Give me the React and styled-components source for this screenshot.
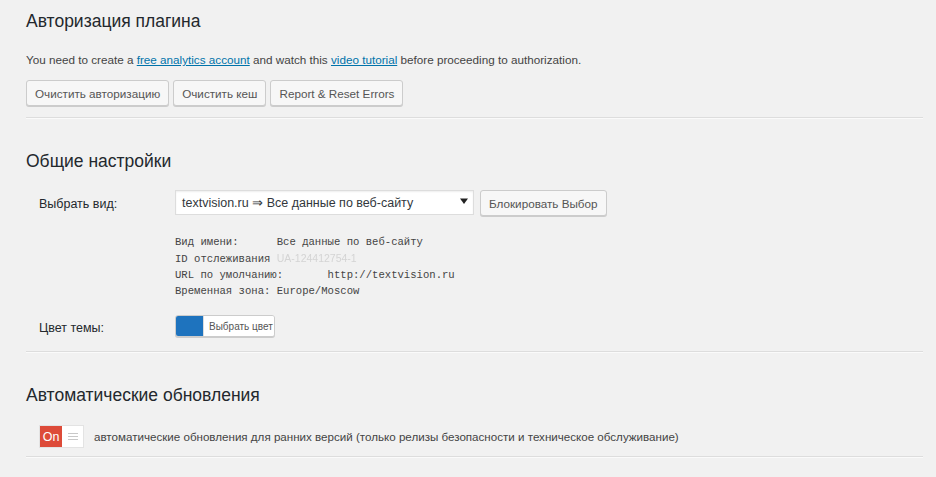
import styled, { createGlobalStyle } from "styled-components";

const GlobalStyle = createGlobalStyle`
    body {
        margin: 0;
        background: #f1f1f1;
        color: #444;
        font-family: "Liberation Sans", Arial, sans-serif;
        font-size: 13px;
    }
`;

const App = () => {
    return (
        <>
            <GlobalStyle />
            <Wrap>
                <Heading $top={7}>Авторизация плагина</Heading>
                <Text>
                    You need to create a <Link>free analytics account</Link> and watch this{" "}
                    <Link>video tutorial</Link> before proceeding to authorization.
                </Text>
                <Buttons>
                    <Button>Очистить авторизацию</Button>
                    <Button>Очистить кеш</Button>
                    <Button>Report &amp; Reset Errors</Button>
                </Buttons>
                <Rule $top={11} />

                <Heading $top={29}>Общие настройки</Heading>
                <Row $top={15}>
                    <Label>Выбрать вид:</Label>
                    <Field>
                        <Controls>
                            <Select>
                                <span>textvision.ru ⇒ Все данные по веб-сайту</span>
                                <Arrow viewBox="0 0 8 8">
                                    <path d="M0 1.5h8L4 7z" fill="#222" />
                                </Arrow>
                            </Select>
                            <Button>Блокировать Выбор</Button>
                        </Controls>
                        <Info>
                            <InfoLine>{"Вид имени:      Все данные по веб-сайту"}</InfoLine>
                            <InfoLine>
                                {"ID отслеживания "}
                                <Blurred>UA-124412754-1</Blurred>
                            </InfoLine>
                            <InfoLine>{"URL по умолчанию:       http://textvision.ru"}</InfoLine>
                            <InfoLine>{"Временная зона: Europe/Moscow"}</InfoLine>
                        </Info>
                    </Field>
                </Row>
                <Row $top={15}>
                    <Label>Цвет темы:</Label>
                    <Field>
                        <ColorButton>
                            <Swatch />
                            <ColorText>Выбрать цвет</ColorText>
                        </ColorButton>
                    </Field>
                </Row>
                <Rule $top={14} />

                <Heading $top={29}>Автоматические обновления</Heading>
                <ToggleRow>
                    <Toggle>
                        <ToggleOn>On</ToggleOn>
                        <ToggleOff>
                            <Bars>
                                <i />
                                <i />
                                <i />
                            </Bars>
                        </ToggleOff>
                    </Toggle>
                    <ToggleText>
                        автоматические обновления для ранних версий (только релизы безопасности и техническое обслуживание)
                    </ToggleText>
                </ToggleRow>
                <Rule $top={8} />
            </Wrap>
        </>
    );
};

export default App;

const Wrap = styled.div`
    width: 897px;
    margin-left: 26px;
    padding-top: 1px;
`;

const Heading = styled.h2`
    margin: ${props => props.$top - 1}px 0 0;
    font-size: 17.5px;
    font-weight: 400;
    line-height: 28px;
    color: #23282d;
`;

const Text = styled.p`
    margin: 16px 0 0;
    line-height: 18px;
    font-size: 11.7px;
    color: #444;
`;

const Link = styled.a`
    color: #0073aa;
    text-decoration: underline;
    cursor: pointer;
`;

const Buttons = styled.div`
    display: flex;
    gap: 4px;
    margin-top: 11px;
`;

const Button = styled.button`
    height: 26px;
    padding: 0 8px;
    border: 1px solid #ccc;
    border-radius: 3px;
    background: #f7f7f7;
    box-shadow: 0 1px 0 #ccc;
    color: #555;
    font-family: inherit;
    font-size: 11.7px;
    white-space: nowrap;
    cursor: pointer;
`;

const Rule = styled.hr`
    margin: ${props => props.$top}px 0 0;
    border: 0;
    border-top: 1px solid #ddd;
    border-bottom: 1px solid #fafafa;
`;

const Row = styled.div`
    display: flex;
    margin-top: ${props => props.$top}px;
`;

const Label = styled.div`
    width: 136px;
    padding-left: 13px;
    padding-top: 5px;
    line-height: 18px;
    color: #23282d;
    font-size: 12.5px;
    box-sizing: border-box;
    flex: none;
    white-space: nowrap;
`;

const Field = styled.div`
    padding-left: 13px;
`;

const Controls = styled.div`
    display: flex;
    align-items: flex-start;
    gap: 6px;
`;

const Select = styled.div`
    width: 299px;
    height: 25px;
    box-sizing: border-box;
    display: flex;
    align-items: center;
    justify-content: space-between;
    padding: 0 5px 0 6px;
    background: #fff;
    border: 1px solid #ddd;
    box-shadow: inset 0 1px 2px rgba(0, 0, 0, 0.07);
    color: #32373c;
    font-size: 12.5px;
`;

const Arrow = styled.svg`
    width: 8px;
    height: 8px;
    margin-bottom: 3px;
`;

const Info = styled.div`
    margin-top: 18px;
    font-family: "Liberation Mono", "DejaVu Sans Mono", monospace;
    font-size: 10.6px;
    line-height: 16px;
    color: #444;
`;

const InfoLine = styled.div`
    white-space: pre;
`;

const Blurred = styled.span`
    font-family: "Liberation Sans", sans-serif;
    font-size: 10.5px;
    color: #d4d4d4;
    filter: blur(0.4px);
`;

const ColorButton = styled.div`
    display: flex;
    width: 100px;
    height: 22px;
    margin-top: 1px;
    box-sizing: border-box;
    border: 1px solid #ccc;
    border-radius: 3px;
    background: #f7f7f7;
    box-shadow: 0 1px 0 #ccc;
    overflow: hidden;
`;

const Swatch = styled.div`
    width: 27px;
    flex: none;
    background: #1e73be;
    border-right: 1px solid #ddd;
`;

const ColorText = styled.div`
    flex: 1;
    display: flex;
    align-items: center;
    padding-left: 5px;
    background: #fff;
    color: #555;
    font-size: 10px;
    white-space: nowrap;
`;

const ToggleRow = styled.div`
    display: flex;
    align-items: center;
    gap: 10px;
    margin-top: 16px;
    padding-left: 13px;
`;

const Toggle = styled.div`
    display: flex;
    height: 21px;
    border: 1px solid #e3e3e3;
`;

const ToggleOn = styled.div`
    width: 22px;
    display: flex;
    align-items: center;
    justify-content: center;
    background: #dd4b39;
    color: #fff;
    font-size: 12.5px;
`;

const ToggleOff = styled.div`
    width: 21px;
    display: flex;
    align-items: center;
    justify-content: center;
    background: #fff;
`;

const Bars = styled.div`
    display: flex;
    flex-direction: column;
    gap: 2px;

    i {
        display: block;
        width: 10px;
        height: 1px;
        background: #c8c8c8;
    }
`;

const ToggleText = styled.div`
    font-size: 11.6px;
    color: #444;
`;
